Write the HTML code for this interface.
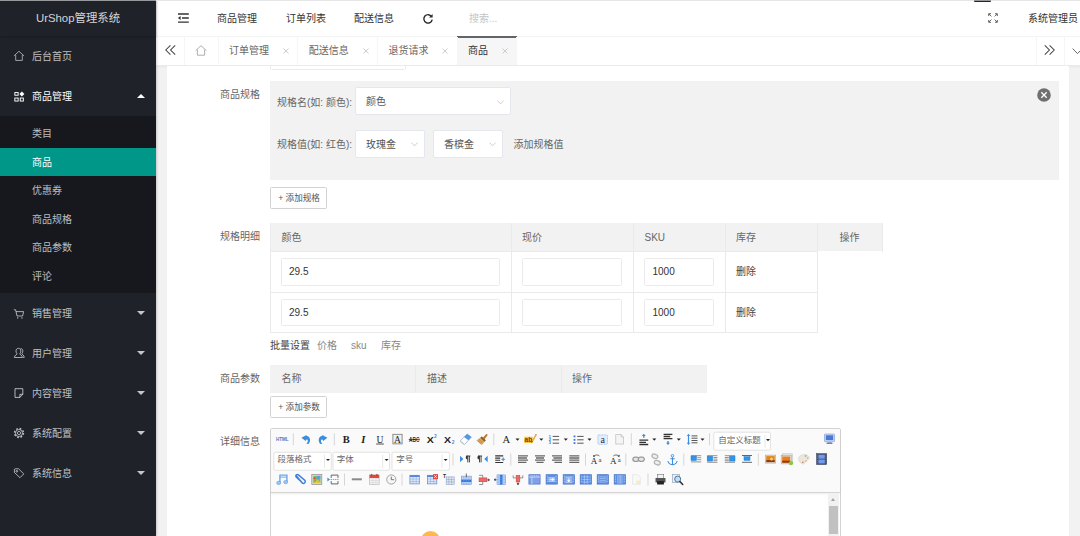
<!DOCTYPE html>
<html lang="zh-CN">
<head>
<meta charset="utf-8">
<title>UrShop管理系统</title>
<style>
*{box-sizing:border-box;margin:0;padding:0}
html,body{width:1080px;height:536px;overflow:hidden}
body{position:relative;background:#f2f2f2;font-family:"Liberation Sans","Noto Sans CJK SC",sans-serif;font-size:10px;color:#666;line-height:1}
.abs{position:absolute}
.t{position:absolute;white-space:nowrap;line-height:14px;height:14px;margin-top:-6.2px}
/* sidebar */
#side{position:absolute;left:0;top:0;width:156px;height:536px;background:#20222a;box-shadow:1px 0 2px rgba(0,0,0,.18);z-index:5;color:rgba(255,255,255,.72)}
#logo{position:absolute;left:0;top:0;width:156px;height:36px;line-height:36px;text-align:center;font-size:11.4px;color:rgba(255,255,255,.82);box-shadow:0 1px 2px rgba(0,0,0,.25)}
#sub{position:absolute;left:0;top:116px;width:156px;height:177px;background:#17181e}
#act{position:absolute;left:0;top:147.5px;width:156px;height:28.5px;background:#009688}
.caret{position:absolute;left:137px;width:0;height:0;border-left:4px solid transparent;border-right:4px solid transparent}
.caret.d{border-top:4.3px solid rgba(255,255,255,.75)}
.caret.u{border-bottom:4.3px solid #fff}
.ico{position:absolute}
/* header */
#head{position:absolute;left:156px;top:0;width:924px;height:36px;background:#fff}
#tabs{position:absolute;left:156px;top:36px;width:924px;height:29.5px;background:#fff;border-top:1px solid #f4f4f4;border-bottom:1px solid #ebebeb;box-shadow:0 1px 2px rgba(0,0,0,.05)}
.sep{position:absolute;top:37px;width:1px;height:27.5px;background:#f5f5f5}
#card{overflow:hidden;position:absolute;left:167px;top:65.6px;width:902px;height:480px;background:#fff}
.inp{position:absolute;background:#fff;border:1px solid #ebebeb;border-radius:1.5px}
.inp.sel{border:0.8px solid #e4e7ee;border-radius:2px}
.th{position:absolute;background:#f2f2f2}
.ln{position:absolute;background:#eaeaea}
.btn{position:absolute;background:#fff;border:1px solid #d2d2d2;border-radius:1.5px;font-size:8.6px;color:#555;text-align:center}
</style>
</head>
<body>
<!-- sidebar -->
<div id="side">
  <div id="sub"></div>
  <div id="act"></div>
  <div id="logo">UrShop管理系统</div>
  <span class="t" style="left:32px;top:56px">后台首页</span>
  <span class="t" style="left:32px;top:96px;color:#fff">商品管理</span>
  <span class="t" style="left:32px;top:133.5px">类目</span>
  <span class="t" style="left:32px;top:162px;color:#fff">商品</span>
  <span class="t" style="left:32px;top:190.5px">优惠券</span>
  <span class="t" style="left:32px;top:219px">商品规格</span>
  <span class="t" style="left:32px;top:247.5px">商品参数</span>
  <span class="t" style="left:32px;top:276px">评论</span>
  <span class="t" style="left:32px;top:313px">销售管理</span>
  <span class="t" style="left:32px;top:353px">用户管理</span>
  <span class="t" style="left:32px;top:393px">内容管理</span>
  <span class="t" style="left:32px;top:433px">系统配置</span>
  <span class="t" style="left:32px;top:473px">系统信息</span>

  <svg class="ico" style="left:13.4px;top:50.4px" width="12" height="12" viewBox="0 0 12 12" fill="none" stroke="rgba(255,255,255,.68)" stroke-width="0.85"><path d="M0.9 5.9 L6 1.3 L11.1 5.9 M2.7 5 V10.4 H9.3 V5"/></svg>
  <svg class="ico" style="left:13px;top:90.5px" width="12" height="12" viewBox="0 0 12 12" fill="none" stroke="#fff" stroke-width="0.95"><rect x="1.85" y="1.55" width="3.3" height="2.7"/><rect x="1.85" y="7.05" width="3.3" height="3"/><rect x="7.25" y="7.05" width="3.1" height="3"/><path d="M8.9 0.4 L11.4 2.9 L8.9 5.4 L6.4 2.9 Z" fill="#fff" stroke="none"/></svg>
  <svg class="ico" style="left:13px;top:307.5px" width="12" height="12" viewBox="0 0 12 12" fill="none" stroke="rgba(255,255,255,.7)" stroke-width="0.88"><path d="M0.8 1.8 H2.6 L4 8 H9.6 L10.6 3.6 H3.1"/><circle cx="4.7" cy="9.9" r="0.7" fill="rgba(255,255,255,.75)" stroke="none"/><circle cx="8.9" cy="9.9" r="0.7" fill="rgba(255,255,255,.75)" stroke="none"/></svg>
  <svg class="ico" style="left:13px;top:347px" width="12" height="12" viewBox="0 0 12 12" fill="none" stroke="rgba(255,255,255,.7)" stroke-width="0.88"><path d="M5.4 1.3 C7 1.3 7.8 2.6 7.8 4 C7.8 5.4 7.1 6.5 6.6 6.9 C6.8 7.7 9.4 8 9.4 10.5 H1.4 C1.4 8 4 7.7 4.2 6.9 C3.7 6.5 3 5.4 3 4 C3 2.6 3.8 1.3 5.4 1.3 Z"/><path d="M7.6 1.5 C9.2 1.6 9.8 2.9 9.8 4.1 C9.8 5.4 9.2 6.4 8.8 6.8 C9 7.5 11.2 7.9 11.2 10.5 H10.2"/></svg>
  <svg class="ico" style="left:13px;top:387px" width="12" height="12" viewBox="0 0 12 12" fill="none" stroke="rgba(255,255,255,.7)" stroke-width="0.95"><path d="M2 1.7 H9.8 V7.3 L6.9 10.4 H2 Z M9.8 7.3 H6.9 V10.4"/></svg>
  <svg class="ico" style="left:13px;top:427px" width="12" height="12" viewBox="0 0 12 12" fill="none" stroke="rgba(255,255,255,.7)" stroke-width="0.88"><circle cx="6" cy="6" r="1.6"/><circle cx="6" cy="6" r="3.5"/><circle cx="6" cy="6" r="4.5" stroke-width="1.4" stroke-dasharray="1.77 1.77"/></svg>
  <svg class="ico" style="left:13px;top:467px" width="12" height="12" viewBox="0 0 12 12" fill="none" stroke="rgba(255,255,255,.7)" stroke-width="0.88"><path d="M1.4 2.6 Q1.4 1.8 2.2 1.8 H5.6 L10.8 6.9 L7 10.7 L1.4 5.5 Z" stroke-linejoin="round"/><circle cx="3.8" cy="4.3" r="0.85"/></svg>
  <i class="caret u" style="top:93.5px"></i>
  <i class="caret d" style="top:310.9px"></i>
  <i class="caret d" style="top:350.9px"></i>
  <i class="caret d" style="top:390.9px"></i>
  <i class="caret d" style="top:430.9px"></i>
  <i class="caret d" style="top:470.9px"></i>
</div>

<!-- header -->
<div id="head"></div>
<span class="t" style="left:217px;top:18px;color:#333">商品管理</span>
<span class="t" style="left:286px;top:18px;color:#333">订单列表</span>
<span class="t" style="left:354px;top:18px;color:#333">配送信息</span>
<span class="t" style="left:469px;top:18px;color:#c4c4c4">搜索...</span>
<span class="t" style="left:1028px;top:18px;color:#333">系统管理员</span>


<svg class="ico" style="left:177px;top:12px" width="13" height="12" viewBox="0 0 13 12" fill="none" stroke="#333" stroke-width="1.3"><path d="M1 2 H11.8 M5 6 H11.8 M1 10.2 H11.8"/><path d="M3.6 4 V8 L0.9 6 Z" fill="#333" stroke="none"/></svg>
<svg class="ico" style="left:422.2px;top:12.5px" width="12" height="12" viewBox="0 0 12 12" fill="none" stroke="#2b2b2b" stroke-width="1.4"><path d="M9.6 3.6 A4.2 4.2 0 1 0 10.2 6.6"/><path d="M10.6 1 V4.6 H7 Z" fill="#2b2b2b" stroke="none"/></svg>
<svg class="ico" style="left:988px;top:13px" width="10" height="10" viewBox="0 0 10 10" fill="none" stroke="#555" stroke-width="0.9"><path d="M0.7 3 V0.7 H3 M7 0.7 H9.3 V3 M9.3 7 V9.3 H7 M3 9.3 H0.7 V7 M0.9 0.9 L3.4 3.4 M9.1 0.9 L6.6 3.4 M9.1 9.1 L6.6 6.6 M0.9 9.1 L3.4 6.6"/></svg>
<!-- tabs -->
<div id="tabs"></div>
<div class="abs" style="left:457px;top:37px;width:59.5px;height:27.5px;background:#f6f6f6"></div>
<div class="abs" style="left:457px;top:36px;width:59.5px;height:1.9px;background:#63646a"></div>
<i class="sep" style="left:184px"></i><i class="sep" style="left:218px"></i><i class="sep" style="left:297px"></i><i class="sep" style="left:377px"></i><i class="sep" style="left:457px"></i><i class="sep" style="left:516px"></i><i class="sep" style="left:1036px"></i><i class="sep" style="left:1063.5px"></i>
<span class="t" style="left:229px;top:50.6px">订单管理</span>
<span class="t" style="left:308.8px;top:50.6px">配送信息</span>
<span class="t" style="left:388.4px;top:50.6px">退货请求</span>
<span class="t" style="left:468px;top:50.6px;color:#333">商品</span>


<svg class="ico" style="left:165px;top:45px" width="11" height="10" viewBox="0 0 11 10" fill="none" stroke="#444" stroke-width="1.05"><path d="M5.4 0.4 L0.8 5 L5.4 9.6 M10.2 0.4 L5.6 5 L10.2 9.6"/></svg>
<svg class="ico" style="left:195px;top:44.5px" width="12" height="11" viewBox="0 0 12 11" fill="none" stroke="#a6a6a6" stroke-width="0.9"><path d="M0.6 5.6 L6 0.7 L11.4 5.6 M2.4 4.6 V10.2 H9.6 V4.6"/></svg>
<svg class="ico" style="left:1043.5px;top:45px" width="11" height="10" viewBox="0 0 11 10" fill="none" stroke="#444" stroke-width="1.05"><path d="M0.8 0.4 L5.4 5 L0.8 9.6 M5.6 0.4 L10.2 5 L5.6 9.6"/></svg>
<svg class="ico" style="left:1071.5px;top:47.5px" width="11" height="7" viewBox="0 0 11 7" fill="none" stroke="#555" stroke-width="0.9"><path d="M0.6 0.6 L5.5 5.6 L10.4 0.6"/></svg>
<svg class="ico x" style="left:283px;top:48px" width="6" height="6" viewBox="0 0 6 6" stroke="#c2c2c2" stroke-width="0.8"><path d="M0.5 0.5 L5.5 5.5 M5.5 0.5 L0.5 5.5"/></svg>
<svg class="ico x" style="left:362.5px;top:48px" width="6" height="6" viewBox="0 0 6 6" stroke="#c2c2c2" stroke-width="0.8"><path d="M0.5 0.5 L5.5 5.5 M5.5 0.5 L0.5 5.5"/></svg>
<svg class="ico x" style="left:442px;top:48px" width="6" height="6" viewBox="0 0 6 6" stroke="#c2c2c2" stroke-width="0.8"><path d="M0.5 0.5 L5.5 5.5 M5.5 0.5 L0.5 5.5"/></svg>
<svg class="ico x" style="left:501.5px;top:48px" width="6" height="6" viewBox="0 0 6 6" stroke="#c2c2c2" stroke-width="0.8"><path d="M0.5 0.5 L5.5 5.5 M5.5 0.5 L0.5 5.5"/></svg>
<!-- card -->
<div id="card"><div class="inp" style="left:103px;top:-15.6px;width:135.5px;height:19.5px"></div></div>

<!-- spec box -->
<div class="abs" style="left:270px;top:81px;width:788.7px;height:98.6px;background:#f2f2f2"></div>
<span class="t" style="left:220px;top:94px">商品规格</span>
<span class="t" style="left:277px;top:102px">规格名(如: 颜色):</span>
<div class="inp sel" style="left:355.2px;top:87.4px;width:156.2px;height:28.1px"></div>
<span class="t" style="left:366px;top:101.5px;color:#555">颜色</span>
<span class="t" style="left:277px;top:144.5px">规格值(如: 红色):</span>
<div class="inp sel" style="left:355.2px;top:130.1px;width:70.2px;height:28.2px"></div>
<div class="inp sel" style="left:433.2px;top:130.1px;width:70.2px;height:28.2px"></div>
<span class="t" style="left:366px;top:144px;color:#555">玫瑰金</span>
<span class="t" style="left:444px;top:144px;color:#555">香槟金</span>
<span class="t" style="left:513.5px;top:144.5px">添加规格值</span>
<div class="btn" style="left:270px;top:187px;width:56.5px;height:21.5px;line-height:21.2px;padding-left:1.6px">+ 添加规格</div>


<svg class="ico" style="left:496.5px;top:99.5px" width="7" height="5" viewBox="0 0 7 5" fill="none" stroke="#c2c2c2" stroke-width="0.8"><path d="M0.4 0.6 L3.5 3.9 L6.6 0.6"/></svg>
<svg class="ico" style="left:410.5px;top:142px" width="7" height="5" viewBox="0 0 7 5" fill="none" stroke="#c2c2c2" stroke-width="0.8"><path d="M0.4 0.6 L3.5 3.9 L6.6 0.6"/></svg>
<svg class="ico" style="left:488.5px;top:142px" width="7" height="5" viewBox="0 0 7 5" fill="none" stroke="#c2c2c2" stroke-width="0.8"><path d="M0.4 0.6 L3.5 3.9 L6.6 0.6"/></svg>
<svg class="ico" style="left:1037.2px;top:87.7px" width="14" height="14" viewBox="0 0 14 14"><circle cx="7" cy="7" r="6.8" fill="#6f6f6f"/><path d="M4.3 4.3 L9.7 9.7 M9.7 4.3 L4.3 9.7" stroke="#fff" stroke-width="1.35"/></svg>
<!-- spec table -->
<span class="t" style="left:220px;top:236.5px">规格明细</span>
<div class="th" style="left:270px;top:223.4px;width:612.8px;height:28px"></div>
<div class="ln" style="left:270px;top:251.3px;width:547.5px;height:1px"></div>
<div class="ln" style="left:270px;top:291.8px;width:547.5px;height:1px"></div>
<div class="ln" style="left:270px;top:332.2px;width:547.5px;height:1px"></div>
<div class="ln" style="left:270px;top:223.4px;width:1px;height:109.3px"></div>
<div class="ln" style="left:510.5px;top:223.4px;width:1px;height:109.3px"></div>
<div class="ln" style="left:633.3px;top:223.4px;width:1px;height:109.3px"></div>
<div class="ln" style="left:724.8px;top:223.4px;width:1px;height:109.3px"></div>
<div class="ln" style="left:816.8px;top:223.4px;width:1px;height:109.3px"></div>
<div class="ln" style="left:882.3px;top:223.4px;width:1px;height:28.3px"></div>
<span class="t" style="left:281.5px;top:237px">颜色</span>
<span class="t" style="left:522px;top:237px">现价</span>
<span class="t" style="left:644.5px;top:237px">SKU</span>
<span class="t" style="left:736px;top:237px">库存</span>
<span class="t" style="left:839.5px;top:237px">操作</span>
<div class="inp" style="left:281.3px;top:258.3px;width:218.4px;height:27.5px"></div>
<div class="inp" style="left:522px;top:258.3px;width:100px;height:27.5px"></div>
<div class="inp" style="left:644.3px;top:258.3px;width:69.8px;height:27.5px"></div>
<div class="inp" style="left:281.3px;top:298.8px;width:218.4px;height:27.5px"></div>
<div class="inp" style="left:522px;top:298.8px;width:100px;height:27.5px"></div>
<div class="inp" style="left:644.3px;top:298.8px;width:69.8px;height:27.5px"></div>
<span class="t" style="left:289px;top:271.5px;color:#333">29.5</span>
<span class="t" style="left:289px;top:312px;color:#333">29.5</span>
<span class="t" style="left:652.5px;top:271.5px;color:#333">1000</span>
<span class="t" style="left:652.5px;top:312px;color:#333">1000</span>
<span class="t" style="left:736px;top:271.5px;color:#444">删除</span>
<span class="t" style="left:736px;top:312px;color:#444">删除</span>
<span class="t" style="left:270px;top:345px;color:#444">批量设置</span>
<span class="t" style="left:317px;top:345px;color:#888">价格</span>
<span class="t" style="left:351px;top:345px;color:#888">sku</span>
<span class="t" style="left:381px;top:345px;color:#888">库存</span>

<!-- param table -->
<span class="t" style="left:220px;top:378px">商品参数</span>
<div class="th" style="left:270px;top:364.5px;width:436.5px;height:28.2px"></div>
<div class="ln" style="left:415px;top:364.5px;width:1px;height:28.2px"></div>
<div class="ln" style="left:560.5px;top:364.5px;width:1px;height:28.2px"></div>
<span class="t" style="left:281.5px;top:378px">名称</span>
<span class="t" style="left:427px;top:378px">描述</span>
<span class="t" style="left:572px;top:378px">操作</span>
<div class="btn" style="left:270px;top:396.3px;width:56.5px;height:21.6px;line-height:21.2px;padding-left:1.6px">+ 添加参数</div>

<!-- editor -->
<span class="t" style="left:220px;top:441.5px">详细信息</span>
<div class="abs" id="ed" style="left:270px;top:428px;width:570.5px;height:120px;background:#fff;border:1px solid #d4d4d4;border-radius:2px"></div>
<div class="abs" id="edtb" style="left:271px;top:429px;width:568.5px;height:64px;background:#fafafa;border-bottom:1px solid #d4d4d4;box-shadow:0 1px 2px rgba(0,0,0,.08)"></div>

<div class="abs" style="left:827.8px;top:494px;width:11.7px;height:50px;background:#f1f1f1"></div>
<div class="abs" style="left:828.9px;top:505.9px;width:9.2px;height:27.9px;background:#c1c1c1"></div>
<div class="abs" style="left:830.9px;top:498.4px;width:0;height:0;border-left:2.6px solid transparent;border-right:2.6px solid transparent;border-bottom:3px solid #a3a3a3"></div>
<div class="abs" style="left:420.6px;top:530.6px;width:19px;height:19px;border-radius:50%;background:#ffb84d"></div>
<!--TB--><svg class="ico" id="tbsvg" style="left:270px;top:428px" width="571" height="66" viewBox="0 0 571 66"><g transform="translate(12.20 11.30)"><text x="-6.3" y="1.8" textLength="12.6" lengthAdjust="spacingAndGlyphs" style="font-family:'Liberation Sans',sans-serif;font-size:5.2px;font-weight:bold" fill="#3f7fc8">HTML</text></g><rect x="22.80" y="5.30" width="1" height="12" fill="#d6d6d6"/><g transform="translate(35.80 11.30)"><path d="M2.4 4.8 C5.2 2.4 5 -3 0.8 -3.4 L0.8 -4.4 L-4.4 -1.6 L-0.2 1.6 L0.6 0.2 C2.4 0.2 2.6 2.4 0.6 4.4 Z" fill="#3b8ede"/></g><g transform="translate(53.00 11.30)"><path d="M-2.4 4.8 C-5.2 2.4 -5 -3 -0.8 -3.4 L-0.8 -4.4 L4.4 -1.6 L0.2 1.6 L-0.6 0.2 C-2.4 0.2 -2.6 2.4 -0.6 4.4 Z" fill="#3b8ede"/></g><rect x="63.80" y="5.30" width="1" height="12" fill="#d6d6d6"/><g transform="translate(76.30 11.30)"><text x="0" y="3.6" text-anchor="middle" style="font-family:'Liberation Serif',serif;font-size:10.5px;font-weight:bold" fill="#222">B</text></g><g transform="translate(93.30 11.30)"><text x="0" y="3.6" text-anchor="middle" style="font-family:'Liberation Serif',serif;font-size:10.5px;font-weight:bold;font-style:italic" fill="#222">I</text></g><g transform="translate(110.00 11.30)"><text x="0" y="3.2" text-anchor="middle" style="font-family:'Liberation Serif',serif;font-size:9.6px" fill="#222">U</text><rect x="-3.8" y="4.3" width="7.6" height="0.8" fill="#222"/></g><g transform="translate(127.50 11.30)"><rect x="-4.6" y="-5" width="9.2" height="9.6" fill="#f0f0f0" stroke="#777" stroke-width="0.8"/><text x="0" y="3.4" text-anchor="middle" style="font-family:'Liberation Serif',serif;font-size:9.6px" fill="#222">A</text></g><g transform="translate(144.30 11.30)"><text x="-5.2" y="2.6" textLength="10.4" lengthAdjust="spacingAndGlyphs" style="font-family:'Liberation Sans',sans-serif;font-size:6.6px;font-weight:bold" fill="#333">ABC</text><rect x="-5.6" y="-0.1" width="11.2" height="0.7" fill="#222"/></g><g transform="translate(160.60 11.30)"><text transform="translate(-0.4 3) scale(1.2 1)" x="0" y="0.3" text-anchor="middle" style="font-family:'Liberation Sans',sans-serif;font-size:8.8px;font-weight:bold" fill="#222">X</text><text x="4.8" y="-1.2" text-anchor="middle" style="font-family:'Liberation Sans',sans-serif;font-size:4.8px;font-weight:bold" fill="#3b8ede">2</text></g><g transform="translate(178.00 11.30)"><text transform="translate(-0.4 3) scale(1.2 1)" x="0" y="0.3" text-anchor="middle" style="font-family:'Liberation Sans',sans-serif;font-size:8.8px;font-weight:bold" fill="#222">X</text><text x="5" y="4.4" text-anchor="middle" style="font-family:'Liberation Sans',sans-serif;font-size:4.8px;font-weight:bold" fill="#3b8ede">2</text></g><g transform="translate(195.80 11.30)"><path d="M-5.6 1.6 L1.4 -5.4 L5.6 -2.2 L-1.2 5.2 Z" fill="#fdfdfd" stroke="#9aa6b8" stroke-width="0.7"/><path d="M1.4 -5.4 L5.6 -2.2 L2.6 1 L-1.8 -2.2 Z" fill="#4f9ae8"/><path d="M-5.6 1.6 L-1.2 5.2 L-1.2 6 L-5.6 2.6 Z" fill="#b8c0cc"/></g><g transform="translate(212.50 11.30)"><path d="M5.4 -4.6 L3.8 -5.4 L0.4 -1.6 L2 0 Z" fill="#b9752c"/><path d="M-6 1.2 L-0.8 -2.8 L3.2 1 L-0.6 5.6 Z" fill="#d6a45c"/><path d="M-0.8 -2.8 L3.2 1 L2 2.4 L-2 -1.6 Z" fill="#8c5a22"/><path d="M-4.6 1.8 L-1.6 4.6 M-3.2 0.6 L-0.2 3.4" stroke="#a87a3a" stroke-width="0.6"/></g><rect x="223.30" y="5.30" width="1" height="12" fill="#d6d6d6"/><g transform="translate(236.30 11.30)"><text x="0" y="3.4" text-anchor="middle" style="font-family:'Liberation Serif',serif;font-size:10.6px" fill="#222">A</text></g><path d="M245.50 10.50 h4 l-2 2.2 z" fill="#222"/><g transform="translate(259.60 11.30)"><rect x="-5.4" y="-2.6" width="8.6" height="6.4" fill="#f7c948"/><text x="-1.2" y="2.8" text-anchor="middle" style="font-family:'Liberation Sans',sans-serif;font-size:6.6px;font-weight:bold" fill="#7a3b00">ab</text><path d="M5.6 -4.6 L2.2 1.6 L3.4 2.4 L6.8 -3.8 Z" fill="#e8a838"/><path d="M2.2 1.6 L1.4 3.8 L3.4 2.4 Z" fill="#7a4a20"/><path d="M5.6 -4.6 L6.8 -3.8 L7.2 -4.8 L6.2 -5.4 Z" fill="#e05a4a"/></g><path d="M269.30 10.50 h4 l-2 2.2 z" fill="#222"/><g transform="translate(284.30 11.80)"><path d="M-1.6 -3.4 h6.4 M-1.6 0 h6.4 M-1.6 3.4 h6.4" stroke="#444" stroke-width="0.9"/><text x="-4.5" y="-2.1" text-anchor="middle" style="font-family:'Liberation Sans',sans-serif;font-size:3.9px;font-weight:bold" fill="#2f62e0">1</text><text x="-4.5" y="1.3" text-anchor="middle" style="font-family:'Liberation Sans',sans-serif;font-size:3.9px;font-weight:bold" fill="#2f62e0">2</text><text x="-4.5" y="4.7" text-anchor="middle" style="font-family:'Liberation Sans',sans-serif;font-size:3.9px;font-weight:bold" fill="#2f62e0">3</text></g><path d="M293.80 10.50 h4 l-2 2.2 z" fill="#222"/><g transform="translate(308.80 11.80)"><path d="M-1.6 -3.4 h6.4 M-1.6 0 h6.4 M-1.6 3.4 h6.4" stroke="#444" stroke-width="0.9"/><path d="M-5.2 -3.4 h1.8 M-5.2 0 h1.8 M-5.2 3.4 h1.8" stroke="#3b6fe0" stroke-width="1.7"/></g><path d="M317.50 10.50 h4 l-2 2.2 z" fill="#222"/><g transform="translate(332.70 11.50)"><rect x="-4.8" y="-4.6" width="9.6" height="9.4" rx="1" fill="#e3edfc" stroke="#8fb6f0" stroke-width="0.8" stroke-dasharray="1 0.6"/><text x="0" y="3" text-anchor="middle" style="font-family:'Liberation Serif',serif;font-size:10px" fill="#333">a</text></g><g transform="translate(349.50 11.30)"><path d="M-3.8 -4.8 H1.6 L4 -2.4 V4.8 H-3.8 Z" fill="#f4f4f4" stroke="#bdbdbd" stroke-width="0.7"/><path d="M1.6 -4.8 V-2.4 H4" fill="none" stroke="#bdbdbd" stroke-width="0.7"/></g><rect x="360.80" y="5.30" width="1" height="12" fill="#d6d6d6"/><g transform="translate(373.80 11.30)"><path d="M-4.4 0.8 h8.8 M-4.4 3 h6.6 M-4.4 5.2 h8.8" stroke="#333" stroke-width="1.3"/><path d="M0 -5.6 l2 2.4 h-1.3 v1.6 h-1.4 v-1.6 h-1.3 z" fill="#3b8ede"/></g><path d="M382.30 10.50 h4 l-2 2.2 z" fill="#222"/><g transform="translate(398.00 11.30)"><path d="M-4.4 -5 h8.8 M-4.4 -2.8 h6.6 M-4.4 -0.6 h8.8" stroke="#333" stroke-width="1.3"/><path d="M0 5.8 l2 -2.4 h-1.3 v-1.6 h-1.4 v1.6 h-1.3 z" fill="#3b8ede"/></g><path d="M406.80 10.50 h4 l-2 2.2 z" fill="#222"/><g transform="translate(422.50 11.30)"><path d="M-1 -3.4 h6 M-1 -1.1 h6 M-1 1.2 h6 M-1 3.5 h6" stroke="#444" stroke-width="0.9"/><path d="M-4 -5.6 l1.7 2.2 h-1.1 v6.8 h1.1 l-1.7 2.2 l-1.7 -2.2 h1.1 v-6.8 h-1.1 z" fill="#3b8ede"/></g><path d="M430.50 10.50 h4 l-2 2.2 z" fill="#222"/><rect x="439.00" y="5.30" width="1" height="12" fill="#d6d6d6"/><rect x="443.80" y="4.20" width="56.70" height="18" rx="1.6" fill="#fff" stroke="#dcdcdc" stroke-width="0.8"/><rect x="494.60" y="6.70" width="0.8" height="13" fill="#e2e2e2"/><text x="448.30" y="14.80" style="font-family:'Liberation Sans','Noto Sans CJK SC',sans-serif;font-size:8.5px" fill="#666">自定义标题</text><path d="M496.00 11.00 h4 l-2 2.2 z" fill="#222"/><g transform="translate(559.50 10.80)"><rect x="-5" y="-4.8" width="10" height="7.8" rx="0.8" fill="#c6d4f0" stroke="#8aa0d4" stroke-width="0.7"/><rect x="-3.6" y="-3.5" width="7.2" height="4.8" fill="#4878d8"/><path d="M-2 3.6 h4 l1.4 1.4 h-6.8 z" fill="#3a5ab0"/></g><rect x="3.80" y="24.30" width="57.50" height="18" rx="1.6" fill="#fff" stroke="#dcdcdc" stroke-width="0.8"/><rect x="54.00" y="26.80" width="0.8" height="13" fill="#e2e2e2"/><text x="7.50" y="33.80" style="font-family:'Liberation Sans','Noto Sans CJK SC',sans-serif;font-size:8.5px" fill="#666">段落格式</text><path d="M56.00 30.90 h4 l-2 2.2 z" fill="#222"/><rect x="63.00" y="24.30" width="56.50" height="18" rx="1.6" fill="#fff" stroke="#dcdcdc" stroke-width="0.8"/><rect x="112.30" y="26.80" width="0.8" height="13" fill="#e2e2e2"/><text x="66.80" y="33.80" style="font-family:'Liberation Sans','Noto Sans CJK SC',sans-serif;font-size:8.5px" fill="#666">字体</text><path d="M114.60 30.90 h4 l-2 2.2 z" fill="#222"/><rect x="122.00" y="24.30" width="57.50" height="18" rx="1.6" fill="#fff" stroke="#dcdcdc" stroke-width="0.8"/><rect x="171.60" y="26.80" width="0.8" height="13" fill="#e2e2e2"/><text x="126.30" y="33.80" style="font-family:'Liberation Sans','Noto Sans CJK SC',sans-serif;font-size:8.5px" fill="#666">字号</text><path d="M173.60 30.90 h4 l-2 2.2 z" fill="#222"/><rect x="182.50" y="25.60" width="1" height="12" fill="#d6d6d6"/><g transform="translate(195.00 31.00)"><path d="M-5 -3.2 L-1.6 0 L-5 3.2 Z" fill="#3b8ede"/><path d="M1.4 -3 h4 M2.8 -3 v6.4 M4.4 -3 v6.4" stroke="#333" stroke-width="0.9"/><path d="M2.6 -3.4 a1.9 1.9 0 0 0 0 3.8 z" fill="#333"/></g><g transform="translate(212.50 31.00)"><path d="M5.2 -3.2 L1.8 0 L5.2 3.2 Z" fill="#3b8ede"/><path d="M-4.4 -3 h4 M-3 -3 v6.4 M-1.4 -3 v6.4" stroke="#333" stroke-width="0.9"/><path d="M-3.2 -3.4 a1.9 1.9 0 0 0 0 3.8 z" fill="#333"/></g><g transform="translate(230.00 31.20)"><path d="M-4.8 -3.3 h8 M-4.8 -1.1 h5 M-4.8 1.1 h5 M-4.8 3.3 h8" stroke="#333" stroke-width="1.1"/><path d="M1.4 0 h3.6 M3.2 -1.8 v3.6" stroke="#3b8ede" stroke-width="1.1"/></g><rect x="240.30" y="25.60" width="1" height="12" fill="#d6d6d6"/><g transform="translate(253.00 31.10)"><path d="M-5 -3.3 h10 M-5 -1.1 h9 M-5 1.1 h10 M-5 3.3 h8.4" stroke="#666" stroke-width="1.3"/></g><g transform="translate(270.00 31.10)"><path d="M-5 -3.3 h10 M-4 -1.1 h8 M-5 1.1 h10 M-3.6 3.3 h7.2" stroke="#666" stroke-width="1.3"/></g><g transform="translate(287.00 31.10)"><path d="M-5 -3.3 h10 M-3.6 -1.1 h8.6 M-5 1.1 h10 M-2.6 3.3 h7.6" stroke="#666" stroke-width="1.3"/></g><g transform="translate(304.30 31.10)"><path d="M-5 -3.3 h10 M-5 -1.1 h10 M-5 1.1 h10 M-5 3.3 h10" stroke="#666" stroke-width="1.3"/></g><rect x="315.00" y="25.60" width="1" height="12" fill="#d6d6d6"/><g transform="translate(326.30 31.60)"><text x="-2.2" y="4.6" text-anchor="middle" style="font-family:'Liberation Serif',serif;font-size:9px" fill="#222">A</text><text x="3.6" y="2.8" text-anchor="middle" style="font-family:'Liberation Serif',serif;font-size:6.6px" fill="#222">a</text><path d="M-2.2 -3.6 a3.6 3 0 0 1 5.4 0" fill="none" stroke="#333" stroke-width="0.7"/><path d="M-3.2 -4.6 l0.4 2.2 l1.8 -1.2 z" fill="#333"/></g><g transform="translate(345.50 31.60)"><text x="-2.2" y="4.6" text-anchor="middle" style="font-family:'Liberation Serif',serif;font-size:9px" fill="#222">A</text><text x="3.6" y="2.8" text-anchor="middle" style="font-family:'Liberation Serif',serif;font-size:6.6px" fill="#222">a</text><path d="M-2.2 -3.6 a3.6 3 0 0 1 5.4 0" fill="none" stroke="#333" stroke-width="0.7"/><path d="M4.2 -4.8 l-0.4 2.4 l-1.8 -1.2 z" fill="#333"/></g><rect x="355.30" y="25.60" width="1" height="12" fill="#d6d6d6"/><g transform="translate(368.50 31.30)"><rect x="-5.6" y="-2.1" width="6" height="4.2" rx="2.1" fill="#e6e6e6" stroke="#9a9a9a" stroke-width="1.3"/><rect x="-0.2" y="-2.1" width="6" height="4.2" rx="2.1" fill="#e6e6e6" stroke="#9a9a9a" stroke-width="1.3"/></g><g transform="translate(385.80 31.60)"><rect x="-5" y="-4.8" width="6" height="4" rx="2" fill="#eee" stroke="#b0b0b0" stroke-width="1.2" transform="rotate(20)"/><rect x="-0.6" y="0.4" width="6" height="4" rx="2" fill="#eee" stroke="#b0b0b0" stroke-width="1.2" transform="rotate(20)"/></g><g transform="translate(402.50 31.60)"><circle cx="0" cy="-3.8" r="1.3" fill="none" stroke="#3b8ede" stroke-width="0.9"/><path d="M0 -2.4 V5 M-2.2 -0.8 h4.4 M-4.6 1.4 C-4 4.2 -2 5 0 5 C2 5 4 4.2 4.6 1.4" fill="none" stroke="#3b8ede" stroke-width="1.1"/></g><rect x="413.30" y="25.60" width="1" height="12" fill="#d6d6d6"/><g transform="translate(426.00 31.10)"><rect x="-5" y="-3.2" width="5.4" height="4.6" fill="#2f95e8" stroke="#1d78cc" stroke-width="0.5"/><path d="M-5 -3.4 h10.2 M1.2 -1.4 h4 M1.2 0.6 h4 M-5 2.8 h10.2" stroke="#888" stroke-width="0.9"/></g><g transform="translate(442.20 31.10)"><rect x="-5" y="-3" width="5.4" height="5" fill="#2f95e8" stroke="#1d78cc" stroke-width="0.5"/><path d="M-5 -3.4 h10.2 M1.2 -1.6 h4 M1.2 0 h4 M1.2 1.6 h4 M-5 3.2 h10.2" stroke="#888" stroke-width="0.9"/></g><g transform="translate(460.00 31.10)"><rect x="-0.4" y="-3" width="5.4" height="5" fill="#2f95e8" stroke="#1d78cc" stroke-width="0.5"/><path d="M-5.2 -3.4 h10.2 M-5.2 -1.6 h4 M-5.2 0 h4 M-5.2 1.6 h4 M-5.2 3.2 h10.2" stroke="#888" stroke-width="0.9"/></g><g transform="translate(477.00 31.10)"><rect x="-3" y="-2.4" width="6" height="3.6" fill="#2f95e8" stroke="#1d78cc" stroke-width="0.5"/><path d="M-5 -3.6 h10 M-5 3.2 h10" stroke="#666" stroke-width="1"/></g><rect x="487.80" y="25.60" width="1" height="12" fill="#d6d6d6"/><g transform="translate(500.50 31.10)"><rect x="-5.2" y="-4" width="10.4" height="8" fill="#dcdcdc" stroke="#a8a8a8" stroke-width="0.6"/><rect x="-4.2" y="-3" width="8.4" height="6" fill="#e8801e"/><rect x="-4.2" y="1" width="8.4" height="2" fill="#8a3a10"/><circle cx="1" cy="0" r="1.5" fill="#ffd060"/></g><g transform="translate(517.00 31.10)"><rect x="-4.8" y="-5.2" width="10" height="8" fill="#eee" stroke="#b0b0b0" stroke-width="0.6"/><rect x="-5.8" y="-3.6" width="10" height="8.4" fill="#e2e2e2" stroke="#a8a8a8" stroke-width="0.6"/><rect x="-4.8" y="-2.6" width="8" height="6.2" fill="#e8801e"/><rect x="-4.8" y="1.6" width="8" height="2" fill="#8a3a10"/><circle cx="4" cy="4" r="2.2" fill="#8cc83c"/></g><g transform="translate(534.00 31.00)"><path d="M-5.4 -0.6 C-5 -4.6 3 -6 5 -2.4 C6 0.4 3.4 1.6 2 1.6 C0.6 1.6 1.6 4 0 5 C-2 5.6 -5.6 3 -5.4 -0.6 Z" fill="#ece7dc" stroke="#d4ccb8" stroke-width="0.5"/><circle cx="1.6" cy="-3" r="0.9" fill="#7ab8e8"/><circle cx="3.6" cy="-1" r="0.8" fill="#9cc860"/><circle cx="2" cy="2" r="0.8" fill="#e8a848"/><circle cx="-1.2" cy="3.2" r="0.8" fill="#d86a5a"/></g><g transform="translate(551.60 31.10)"><rect x="-5" y="-5.4" width="10" height="10.8" fill="#3c4660" stroke="#2a3248" stroke-width="0.5"/><rect x="-3.2" y="-4.4" width="6.4" height="4" fill="#6f9cf0"/><rect x="-3.2" y="0.4" width="6.4" height="4" fill="#6f9cf0"/><path d="M-4.2 -4.6 v9.4 M4.2 -4.6 v9.4" stroke="#8a92a8" stroke-width="0.7" stroke-dasharray="0.9 0.9"/></g><g transform="translate(12.50 51.50)"><path d="M-2.6 3.2 V-4.4 H4.4 V2.4" fill="none" stroke="#6aa9ea" stroke-width="1.4"/><path d="M-2.6 -2.4 H4.4" stroke="#6aa9ea" stroke-width="1"/><ellipse cx="-3.8" cy="3.4" rx="2" ry="1.7" fill="#9cc6f3" stroke="#5b9be0" stroke-width="0.6"/><ellipse cx="3.2" cy="2.6" rx="2" ry="1.7" fill="#9cc6f3" stroke="#5b9be0" stroke-width="0.6"/></g><g transform="translate(30.00 51.50)"><path d="M-3.8 -3.8 L2.4 3.6 A1.9 1.9 0 0 0 5 1 L-1.6 -4.6 A1.6 1.6 0 0 0 -4 -2.6 L1.2 2.2" fill="none" stroke="#3f7fe0" stroke-width="1.5" stroke-linecap="round"/></g><g transform="translate(46.80 51.50)"><rect x="-5" y="-5" width="10" height="10" fill="#d8d8d8" stroke="#8c8c8c" stroke-width="0.7"/><rect x="-3.6" y="-3.6" width="7.2" height="7.2" fill="#7fbf5a"/><rect x="-0.2" y="-3.6" width="3.8" height="3.2" fill="#5b9fe0"/><path d="M-2.2 -2.4 l1.2 2 h-2.4 z M-1 0.6 l1.4 2.2 h-2.8 z" fill="#d83a2a"/><path d="M-3.6 3.6 L0.8 0 L3.6 3.6 Z" fill="#e8c23a"/></g><g transform="translate(63.00 51.50)"><path d="M-5.6 -2 L-3 0 L-5.6 2 Z" fill="#3b8ede"/><path d="M-1.8 -1.6 V-4.4 H5 V-1.6 M-1.8 1.6 V4.4 H5 V1.6" fill="none" stroke="#666" stroke-width="1"/><path d="M-2.4 0 h8" stroke="#888" stroke-width="0.8" stroke-dasharray="1.4 0.8"/></g><rect x="74.00" y="45.50" width="1" height="12" fill="#d6d6d6"/><g transform="translate(86.80 51.50)"><rect x="-5" y="-1.2" width="10" height="2" fill="#8a8a8a"/></g><g transform="translate(104.30 51.50)"><rect x="-4.8" y="-4.6" width="9.6" height="9.6" fill="#f4f4f4" stroke="#b0b0b0" stroke-width="0.6"/><rect x="-4.8" y="-4.6" width="9.6" height="3.2" fill="#e0473e"/><path d="M-2.6 -5.6 v2 M2.6 -5.6 v2" stroke="#b0302a" stroke-width="1"/><path d="M-4.8 1 h9.6 M-4.8 3 h9.6 M-1.6 -1.2 v6 M1.6 -1.2 v6" stroke="#d0d0d0" stroke-width="0.5"/></g><g transform="translate(121.30 51.50)"><circle cx="0" cy="0" r="4.6" fill="#f6f6f6" stroke="#9a9a9a" stroke-width="0.9"/><path d="M0 -2.8 V0.2 H2.8" fill="none" stroke="#666" stroke-width="0.9"/></g><rect x="131.50" y="45.50" width="1" height="12" fill="#d6d6d6"/><g transform="translate(144.50 51.50)"><rect x="-4.6" y="-4.2" width="9.4" height="8.6" fill="#dde7f7" stroke="#5a86d4" stroke-width="0.7"/><rect x="-4.6" y="-4.2" width="9.4" height="1.6" fill="#4a7cd4"/><path d="M-4.6 -0.4 h9.4 M-4.6 2 h9.4 M-1.5 -2.6 v7 M1.7 -2.6 v7" stroke="#8fb0e6" stroke-width="0.6"/></g><g transform="translate(162.00 51.50)"><rect x="-4.6" y="-4.2" width="9.4" height="8.6" fill="#dde7f7" stroke="#5a86d4" stroke-width="0.7"/><rect x="-4.6" y="-4.2" width="9.4" height="1.6" fill="#4a7cd4"/><path d="M-4.6 -0.4 h9.4 M-4.6 2 h9.4 M-1.5 -2.6 v7 M1.7 -2.6 v7" stroke="#8fb0e6" stroke-width="0.6"/><rect x="1" y="-5.4" width="5" height="5" fill="#e0473e"/><path d="M2.2 -4.2 l2.6 2.6 M4.8 -4.2 l-2.6 2.6" stroke="#fff" stroke-width="0.8"/></g><g transform="translate(178.80 51.50)"><rect x="-2.6" y="-2.6" width="8" height="7.4" fill="#dfe6f2" stroke="#8aa0c4" stroke-width="0.6"/><path d="M-2.6 0 h8 M-2.6 2.4 h8 M0 -2.6 v7.4 M2.8 -2.6 v7.4" stroke="#8aa0c4" stroke-width="0.5"/><text x="-4.4" y="-1.4" text-anchor="middle" style="font-family:'Liberation Sans',sans-serif;font-size:5px;font-weight:bold" fill="#333">T</text></g><g transform="translate(196.30 51.50)"><rect x="-5" y="-3.4" width="10" height="8.4" fill="#d4e1f6" stroke="#5a86d4" stroke-width="0.5"/><rect x="-5" y="0" width="10" height="2.6" fill="#2f7ae0"/><path d="M-2.5 -3.4 v8.4 M0 -3.4 v8.4 M2.5 -3.4 v8.4 M-5 -1.6 h10 M-5 3.8 h10" stroke="#7ea6e4" stroke-width="0.5"/><path d="M0 -6 v3.6" stroke="#333" stroke-width="0.7"/></g><g transform="translate(213.30 51.50)"><rect x="-4.2" y="-1.6" width="7.8" height="3.8" fill="#ee6a66" stroke="#d0403a" stroke-width="0.6"/><path d="M-4.2 -4.2 h3.6 v2.4 M-4.2 5 h3.6 v-2.6" fill="none" stroke="#666" stroke-width="0.7"/><path d="M3.6 0.4 h2 M5 -0.6 l1.4 1 l-1.4 1 z" stroke="#333" stroke-width="0.5" fill="#333"/></g><g transform="translate(230.40 51.50)"><rect x="-3.4" y="-4.6" width="8.6" height="9.6" fill="#d4e1f6" stroke="#5a86d4" stroke-width="0.5"/><rect x="-0.6" y="-4.6" width="2.8" height="9.6" fill="#2f7ae0"/><path d="M-3.4 -2.2 h8.6 M-3.4 0.2 h8.6 M-3.4 2.6 h8.6 M3.6 -4.6 v9.6 M-2 -4.6 v9.6" stroke="#7ea6e4" stroke-width="0.5"/><path d="M-6 0.2 h2.4 M-6.4 0.2 l1.4 -1 v2 z" stroke="#333" stroke-width="0.5" fill="#333"/></g><g transform="translate(248.00 51.50)"><rect x="-1.8" y="-4" width="3.6" height="6.4" fill="#ee6a66" stroke="#d0403a" stroke-width="0.6"/><path d="M-4.8 -4.2 v2.6 h3 M4.8 -4.2 v2.6 h-3" fill="none" stroke="#666" stroke-width="0.7"/><path d="M0 2.4 v2.4 M-1 4 l1 1.4 l1 -1.4 z" stroke="#333" stroke-width="0.5" fill="#333"/></g><g transform="translate(264.50 51.50)"><rect x="-5.6" y="-4.8" width="11.2" height="9.4" fill="#7f9fe6" stroke="#4a74cc" stroke-width="0.7"/><path d="M-5.6 -2.4 h11.2 M-2.6 -2.4 v7" stroke="#dfe8fa" stroke-width="0.7"/><path d="M-4 -3.6 h8.4" stroke="#dfe8fa" stroke-width="0.7" stroke-dasharray="1 0.8"/></g><g transform="translate(281.70 51.50)"><rect x="-5.6" y="-4.8" width="11.2" height="9.4" fill="#5e8fe4" stroke="#3f6ec4" stroke-width="0.7"/><path d="M-4.4 -3.8 v7.4 M4.4 -3.8 v7.4" stroke="#cfe0f8" stroke-width="0.8" stroke-dasharray="0.9 0.9"/><rect x="-3.4" y="-1.4" width="6.8" height="2.8" fill="#9fc0f4"/><path d="M-3.4 -2 h6.8 M-3.4 2 h6.8" stroke="#dfe8fa" stroke-width="0.6"/><path d="M0.4 -1 l2.2 1 l-2.2 1 z M-2 0 h2.6" fill="#fff" stroke="#fff" stroke-width="0.6"/></g><g transform="translate(298.80 51.50)"><rect x="-5.6" y="-4.8" width="11.2" height="9.4" fill="#5e8fe4" stroke="#3f6ec4" stroke-width="0.7"/><path d="M-4.4 -3.8 v7.4 M4.4 -3.8 v7.4" stroke="#cfe0f8" stroke-width="0.8" stroke-dasharray="0.9 0.9"/><rect x="-3.4" y="-2.4" width="6.8" height="5.6" fill="#8fb4f0"/><path d="M-3.4 -2.6 h6.8 M-3.4 3.2 h6.8" stroke="#dfe8fa" stroke-width="0.6"/><path d="M-1.2 0.6 l1.2 2 l1.2 -2 z M0 -1.6 v2.4" fill="#fff" stroke="#fff" stroke-width="0.6"/></g><g transform="translate(315.80 51.50)"><rect x="-5.6" y="-4.8" width="11.2" height="9.4" fill="#5e8fe4" stroke="#3f6ec4" stroke-width="0.7"/><path d="M-4.4 -3.8 v7.4 M4.4 -3.8 v7.4" stroke="#cfe0f8" stroke-width="0.8" stroke-dasharray="0.9 0.9"/><path d="M-1.4 -4.6 v9 M1.4 -4.6 v9 M-3.4 0 h6.8 M-3.4 -2.6 h6.8 M-3.4 2.6 h6.8" stroke="#bcd6f8" stroke-width="0.6"/></g><g transform="translate(332.80 51.50)"><rect x="-5.6" y="-4.8" width="11.2" height="9.4" fill="#5e8fe4" stroke="#3f6ec4" stroke-width="0.7"/><path d="M-4.4 -3.8 v7.4 M4.4 -3.8 v7.4" stroke="#cfe0f8" stroke-width="0.8" stroke-dasharray="0.9 0.9"/><path d="M-3.4 -2.6 h6.8 M-3.4 -0.9 h6.8 M-3.4 0.9 h6.8 M-3.4 2.6 h6.8" stroke="#bcd6f8" stroke-width="0.6"/></g><g transform="translate(349.80 51.50)"><rect x="-5.6" y="-4.8" width="11.2" height="9.4" fill="#5e8fe4" stroke="#3f6ec4" stroke-width="0.7"/><path d="M-4.4 -3.8 v7.4 M4.4 -3.8 v7.4" stroke="#cfe0f8" stroke-width="0.8" stroke-dasharray="0.9 0.9"/><path d="M-2 -4.6 v9 M-0.6 -4.6 v9 M0.8 -4.6 v9 M2.2 -4.6 v9" stroke="#bcd6f8" stroke-width="0.6"/></g><g transform="translate(366.30 51.50)"><path d="M-3.8 -4.8 H1.6 L4 -2.4 V4.8 H-3.8 Z" fill="#f8f8f8" stroke="#e2e2e2" stroke-width="0.7"/><rect x="0" y="1" width="4" height="3.4" fill="#f6ecc0"/></g><rect x="377.50" y="45.50" width="1" height="12" fill="#d6d6d6"/><g transform="translate(390.50 51.50)"><rect x="-3.2" y="-5" width="6.4" height="4" fill="#f2f2f2" stroke="#777" stroke-width="0.6"/><rect x="-5" y="-1.6" width="10" height="4.6" rx="0.6" fill="#555"/><rect x="-3.4" y="1.6" width="6.8" height="3.4" fill="#222"/></g><g transform="translate(407.50 51.50)"><rect x="-5" y="-5" width="7" height="8" fill="#e6eef8" stroke="#8a9ab4" stroke-width="0.6"/><circle cx="0.2" cy="-0.4" r="3" fill="#bfe0f4" stroke="#4a6a8a" stroke-width="0.9"/><path d="M2.4 2 L5.2 5" stroke="#333" stroke-width="1.6" stroke-linecap="round"/></g></svg><!--/TB-->
<!-- top line -->
<div class="abs" style="left:974px;top:0;width:17.2px;height:2px;background:#22242c;z-index:6;border-radius:0 0 1px 1px"></div>
<div class="abs" style="left:0;top:0;width:1080px;height:0.8px;background:#e6e6e6;z-index:7"></div>
<div class="abs" style="left:0;top:0;width:156px;height:0.8px;background:#96989c;z-index:7"></div>
<div class="abs" style="left:974px;top:0;width:17.2px;height:0.8px;background:#96989c;z-index:7"></div>
</body>
</html>
